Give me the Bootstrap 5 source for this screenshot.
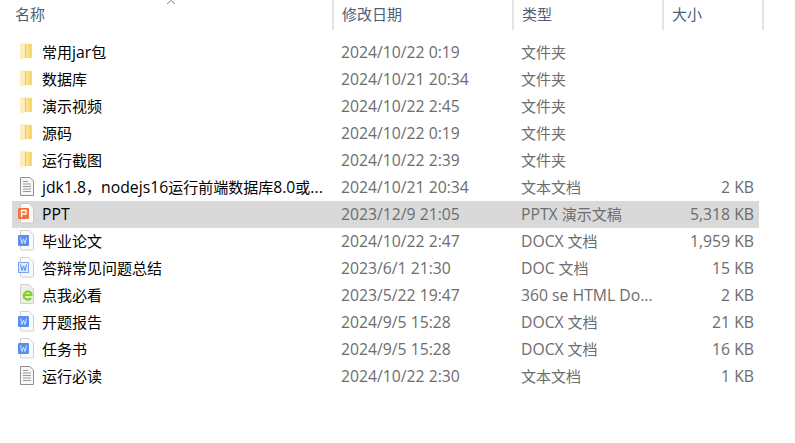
<!DOCTYPE html>
<html lang="zh-CN">
<head>
  <meta charset="UTF-8">
  <title>文件列表</title>
  <link href="https://cdn.jsdelivr.net/npm/bootstrap@5.3.0/dist/css/bootstrap.min.css" rel="stylesheet">
  <style>
    body { background: #fff; font-family: "Open Sans", "Noto Sans CJK SC", sans-serif; font-size: 15px; overflow: hidden; }
    .file-head { height: 30px; position: relative; color: #4c607a; }
    .file-head > div { height: 30px; line-height: 28px; border-right: 2px solid #e5e5e5; padding-left: 8px; }
    .sort-arrow { position: absolute; left: 166px; top: 0; }
    .file-list { margin-top: 9px; }
    .file-row { height: 27px; line-height: 26px; color: #6d6d6d; white-space: nowrap; width: 747px; margin-left: 12px; }
    .file-row.picked { background: #d9d9d9; }
    .lat { font-size: 15.75px; }
    .col-name { width: 321px; padding-left: 30px; color: #000; position: relative; }
    .col-date { width: 180px; padding-left: 8px; }
    .col-type { width: 150px; padding-left: 8px; }
    .col-size { width: 91px; text-align: right; }
    .file-head .h-name { width: 334px; padding-left: 15px; }
    .file-head .h-date { width: 180px; }
    .file-head .h-type { width: 150px; }
    .file-head .h-size { width: 100px; }
    .file-ico { position: absolute; left: 3px; top: 1px; width: 24px; height: 24px; }
  </style>
</head>
<body>
  <svg width="0" height="0" class="d-block">
    <defs>
      <symbol id="i-folder" viewBox="0 0 24 24">
        <path d="M8 3.5 L17 4 V18 H8 Z" fill="#f8d76f"/>
        <path d="M8 4 H13.5 V18 H8 Z" fill="#fbe390"/>
        <path d="M5 3 L10 4.5 V18.5 L5 20 Z" fill="#fdeebb"/>
        <path d="M10.5 4.5 V18" stroke="#efc14f"/>
      </symbol>
      <symbol id="i-txt" viewBox="0 0 24 24">
        <path d="M5.5 2.5 H15 L18.5 6 V20.5 H5.5 Z" fill="#f7f7f7" stroke="#8e8e8e"/>
        <path d="M8 6.5 H13 M8 9 H16 M8 11.5 H16 M8 14 H16 M8 16.5 H16" stroke="#9a9a9a"/>
      </symbol>
      <symbol id="i-ppt" viewBox="0 0 24 24">
        <path d="M5.5 1.5 H14 L18.5 6 V20 Q18.5 21 17.5 21 H6.5 Q5.5 21 5.5 20 Z" fill="#fafafa" stroke="#c9c9c9"/>
        <rect x="3" y="6" width="11" height="11" rx="1" fill="#f4733c"/>
        <path d="M6.5 15 V8.5 H11 V12 H6.5" fill="none" stroke="#fff" stroke-width="1.3"/>
      </symbol>
      <symbol id="i-word" viewBox="0 0 24 24">
        <path d="M5.5 1.5 H14 L18.5 6 V20 Q18.5 21 17.5 21 H6.5 Q5.5 21 5.5 20 Z" fill="#fafafa" stroke="#d0d0d0"/>
        <rect x="3" y="6" width="11" height="11" rx="1" fill="#5a8fee"/>
        <path d="M5.5 8.5 L7 14.5 L8.5 10 L10 14.5 L11.5 8.5" fill="none" stroke="#cfe0fb" stroke-width="1"/>
      </symbol>
      <symbol id="i-doc" viewBox="0 0 24 24">
        <path d="M5.5 1.5 H14 L18.5 6 V20 Q18.5 21 17.5 21 H6.5 Q5.5 21 5.5 20 Z" fill="#fafafa" stroke="#d0d0d0"/>
        <rect x="3.5" y="6.5" width="10" height="10" fill="#dde9fc" stroke="#7aa4ee"/>
        <path d="M5.5 8.5 L7 14.5 L8.5 10 L10 14.5 L11.5 8.5" fill="none" stroke="#5a8fee" stroke-width="1"/>
      </symbol>
      <symbol id="i-html" viewBox="0 0 24 24">
        <path d="M5.5 1.5 H14 L18.5 6 V20.5 H5.5 Z" fill="#ededed" stroke="#cfcfcf"/>
        <path d="M9 12 H16.5 M16 15 A4 4 0 1 1 16.2 10.5 Q17 12 16.5 12" fill="none" stroke="#7ed321" stroke-width="2.2"/>
      </symbol>
    </defs>
  </svg>

  <div class="file-head d-flex">
    <div class="h-name">名称</div>
    <div class="h-date">修改日期</div>
    <div class="h-type">类型</div>
    <div class="h-size">大小</div>
    <svg class="sort-arrow" width="10" height="5" viewBox="0 0 10 5"><path d="M1 4 L5 .5 L9 4" fill="none" stroke="#8a8a8a"/></svg>
  </div>

  <div class="file-list" id="fileList"></div>

  <script>
    const files = [
      ['i-folder', '常用jar包', '2024/10/22 0:19', '文件夹', ''],
      ['i-folder', '数据库', '2024/10/21 20:34', '文件夹', ''],
      ['i-folder', '演示视频', '2024/10/22 2:45', '文件夹', ''],
      ['i-folder', '源码', '2024/10/22 0:19', '文件夹', ''],
      ['i-folder', '运行截图', '2024/10/22 2:39', '文件夹', ''],
      ['i-txt', 'jdk1.8，nodejs16运行前端数据库8.0或...', '2024/10/21 20:34', '文本文档', '2 KB'],
      ['i-ppt', 'PPT', '2023/12/9 21:05', 'PPTX 演示文稿', '5,318 KB'],
      ['i-word', '毕业论文', '2024/10/22 2:47', 'DOCX 文档', '1,959 KB'],
      ['i-doc', '答辩常见问题总结', '2023/6/1 21:30', 'DOC 文档', '15 KB'],
      ['i-html', '点我必看', '2023/5/22 19:47', '360 se HTML Do...', '2 KB'],
      ['i-word', '开题报告', '2024/9/5 15:28', 'DOCX 文档', '21 KB'],
      ['i-word', '任务书', '2024/9/5 15:28', 'DOCX 文档', '16 KB'],
      ['i-txt', '运行必读', '2024/10/22 2:30', '文本文档', '1 KB']
    ];
    // latin runs are a bit larger than the CJK ones in the reference
    const lat = s => s.replace(/[\x21-\x7e]+( [\x21-\x7e]+)*/g, m => `<span class="lat">${m}</span>`);
    let html = '';
    files.forEach((f, i) => {
      html += `<div class="file-row d-flex${i === 6 ? ' picked' : ''}">` +
        `<div class="col-name"><svg class="file-ico"><use href="#${f[0]}"/></svg>${lat(f[1])}</div>` +
        `<div class="col-date">${lat(f[2])}</div><div class="col-type">${lat(f[3])}</div><div class="col-size">${lat(f[4])}</div></div>`;
    });
    document.getElementById('fileList').innerHTML = html;
  </script>
  <script src="https://cdn.jsdelivr.net/npm/bootstrap@5.3.0/dist/js/bootstrap.bundle.min.js"></script>
</body>
</html>
